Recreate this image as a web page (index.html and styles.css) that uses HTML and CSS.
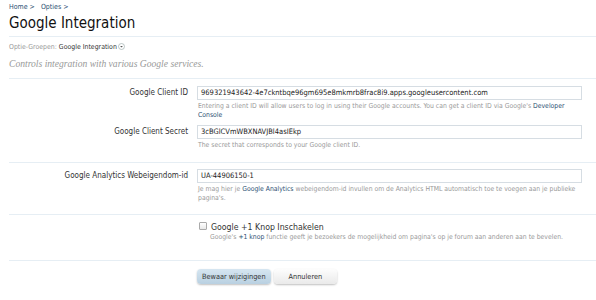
FILE: index.html
```html
<!DOCTYPE html>
<html>
<head>
<meta charset="utf-8">
<link rel="stylesheet" href="styles.css">
</head>
<body>
<div class="page">
  <div class="crumbs"><a>Home</a> &gt; <span class="sp"></span><a>Opties</a> &gt;</div>
  <h1 class="title">Google Integration</h1>
  <div class="groups">Optie-Groepen: <b>Google Integration</b><span class="drop"><svg width="7" height="7" viewBox="0 0 14 14"><circle cx="7" cy="7" r="6" fill="#fff" stroke="#9aa" stroke-width="1.3"/><path d="M4.2 5.8 L7 8.8 L9.8 5.8Z" fill="#555"/></svg></span></div>
  <div class="desc">Controls integration with various Google services.</div>

  <div class="section">
    <div class="row">
      <label class="lbl">Google Client ID</label>
      <div class="ctl">
        <div class="input">969321943642-4e7ckntbqe96gm695e8mkmrb8frac8i9.apps.googleusercontent.com</div>
        <div class="help">Entering a client ID will allow users to log in using their Google accounts. You can get a client ID via Google's <a>Developer Console</a></div>
      </div>
    </div>
    <div class="row r2">
      <label class="lbl">Google Client Secret</label>
      <div class="ctl">
        <div class="input">3cBGlCVmWBXNAVJBl4asIEkp</div>
        <div class="help">The secret that corresponds to your Google client ID.</div>
      </div>
    </div>
  </div>

  <div class="section s2">
    <div class="row">
      <label class="lbl">Google Analytics Webeigendom-id</label>
      <div class="ctl">
        <div class="input">UA-44906150-1</div>
        <div class="help">Je mag hier je <a>Google Analytics</a> webeigendom-id invullen om de Analytics HTML automatisch toe te voegen aan je publieke pagina's.</div>
      </div>
    </div>
  </div>

  <div class="section s3">
    <div class="row">
      <div class="lbl"></div>
      <div class="ctl">
        <div class="check"><span class="box"></span>Google +1 Knop Inschakelen</div>
        <div class="help hc">Google's <a>+1 knop</a> functie geeft je bezoekers de mogelijkheid om pagina's op je forum aan anderen aan te bevelen.</div>
      </div>
    </div>
  </div>

  <div class="section s4">
    <div class="row">
      <div class="lbl"></div>
      <div class="buttons">
        <span class="btn primary">Bewaar wijzigingen</span>
        <span class="btn">Annuleren</span>
      </div>
    </div>
  </div>
</div>
</body>
</html>
```

FILE: styles.css
```css
html, body {
  margin: 0;
  padding: 0;
  background: #fff;
}
body {
  font-family: "DejaVu Sans Condensed", "DejaVu Sans", sans-serif;
  font-stretch: condensed;
  color: #333;
  width: 596px;
  height: 300px;
  overflow: hidden;
}
.page {
  padding: 3px 0 0 9px;
}
a {
  color: #2b4f72;
}
.crumbs {
  font-size: 7px;
  line-height: 9px;
  color: #2b4f72;
}
.crumbs .sp {
  display: inline-block;
  width: 4px;
}
.title {
  margin: 2px 0 0 0;
  font-family: "DejaVu Sans Condensed", "DejaVu Sans", sans-serif;
  font-weight: normal;
  font-size: 15px;
  line-height: 19px;
  color: #111;
  padding-bottom: 3px;
  border-bottom: 1px solid #e6eef4;
}
.groups {
  margin-top: 6px;
  font-size: 6.9px;
  line-height: 9px;
  color: #999;
}
.groups b {
  color: #333;
  font-weight: normal;
}
.drop {
  display: inline-block;
  margin-left: 1px;
  vertical-align: -1px;
}
.desc {
  margin-top: 5px;
  font-family: "Liberation Serif", serif;
  font-style: italic;
  font-size: 9.6px;
  line-height: 12px;
  color: #999;
  padding-bottom: 8px;
  border-bottom: 1px solid #e6eef4;
}
.section {
  padding: 7px 0 12px 0;
  border-bottom: 1px solid #e6eef4;
}
.row {
  display: grid;
  grid-template-columns: 179px 385px;
  column-gap: 9px;
}
.r2 {
  margin-top: 5px;
}
.lbl {
  text-align: right;
  font-size: 8px;
  line-height: 14px;
  color: #333;
}
.input {
  height: 12px;
  border: 1px solid #d6dde3;
  background: #fff;
  font-size: 7.5px;
  line-height: 12px;
  padding: 0 3px;
  color: #222;
  white-space: nowrap;
  overflow: hidden;
}
.help {
  margin-top: 2px;
  font-size: 6.8px;
  line-height: 9px;
  color: #999;
  padding-left: 1px;
}
.s2 {
  padding-top: 6px;
  padding-bottom: 11px;
}
.s3 {
  padding-top: 7px;
  padding-bottom: 18px;
}
.check {
  font-size: 8.7px;
  line-height: 10px;
  color: #333;
  display: flex;
  align-items: center;
}
.box {
  display: inline-block;
  width: 6px;
  height: 6px;
  border: 1px solid #aaa;
  border-radius: 1px;
  background: linear-gradient(#fff, #e8e8e8);
  margin: 0 4px 0 2px;
  position: relative;
  top: -1px;
}
.hc {
  margin-top: 1px;
  padding-left: 13px;
}
.s4 {
  border-bottom: none;
  padding-top: 8px;
}
.buttons {
  display: flex;
  gap: 3px;
}
.btn {
  display: inline-block;
  height: 15px;
  line-height: 15px;
  padding: 0 15px;
  font-size: 7.3px;
  color: #333;
  border-radius: 4px;
  background: linear-gradient(#fdfdfd, #eaeaea);
  box-shadow: 0 1px 2px rgba(0,0,0,0.25);
}
.btn.primary {
  padding: 0 5px;
  background: linear-gradient(#d6e6f1, #b9d0e1);
}
```
